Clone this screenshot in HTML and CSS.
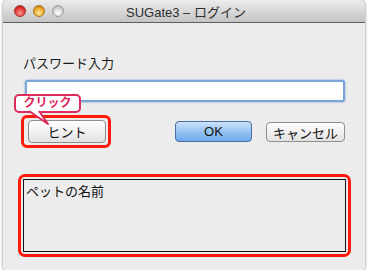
FILE: index.html
```html
<!DOCTYPE html>
<html>

<head>
  <meta charset="utf-8">
  <title>SUGate3 – ログイン</title>
  <link rel="stylesheet" href="styles.css">
</head>

<body>
  <div class="window">
    <div class="titlebar">
      <div class="lights">
        <span class="light red"></span>
        <span class="light yellow"></span>
        <span class="light gray"></span>
      </div>
      <div class="title">SUGate3 – ログイン</div>
    </div>

    <div class="content">
      <div class="label">パスワード入力</div>
      <div class="field"></div>

      <div class="buttons">
        <div class="hint-wrap">
          <div class="callout">
            クリック
            <svg class="tail" width="24" height="16" viewBox="0 0 24 16">
              <polygon points="2,0 12,0 21,14" fill="white" />
              <polyline points="2,1 21,14 12,1" fill="none" stroke="#df2a5c" stroke-width="2" stroke-linejoin="round" />
            </svg>
          </div>
          <button class="btn hint">ヒント</button>
        </div>
        <button class="btn ok">OK</button>
        <button class="btn cancel">キャンセル</button>
      </div>

      <div class="answer-wrap">
        <div class="answer">ペットの名前</div>
      </div>
    </div>
  </div>
</body>

</html>
```

FILE: styles.css
```css
body {
  margin: 0px;
  padding: 0px;
  background-color: white;
  font-family: "Liberation Sans", "Noto Sans CJK JP", sans-serif;
  overflow: hidden;
}

.window {
  margin-left: 3px;
  width: 362px;
  height: 270px;
  background-color: #ececec;
  border-radius: 5px 5px 3px 3px;
  box-shadow: 0px 0px 3px rgba(0, 0, 0, 0.55);
  display: flex;
  flex-direction: column;
  overflow: hidden;
}

.titlebar {
  height: 22px;
  border-bottom: 1px solid #5e5e5e;
  background: linear-gradient(#ececec, #c4c4c4);
  display: flex;
  align-items: center;
  position: relative;
}

.lights {
  display: flex;
  gap: 7px;
  padding-left: 11px;
}

.light {
  width: 12px;
  height: 12px;
  border-radius: 50%;
  box-sizing: border-box;
}

.red {
  background: radial-gradient(circle at 50% 70%, #ff9a94, #e0302a 60%, #9e1a18);
  border: 1px solid #a3332e;
}

.yellow {
  background: radial-gradient(circle at 50% 70%, #ffe7a0, #e8a323 60%, #a06a10);
  border: 1px solid #a5771c;
}

.gray {
  background: radial-gradient(circle at 50% 70%, #ffffff, #cfcfcf 60%, #a5a5a5);
  border: 1px solid #9b9b9b;
}

.title {
  position: absolute;
  left: 0;
  right: 0;
  text-align: center;
  font-size: 13px;
  color: #2e2e2e;
  padding-left: 4px;
}

.content {
  padding: 0px 20px 0px 20px;
  display: flex;
  flex-direction: column;
}

.label {
  margin-top: 30px;
  font-size: 13px;
  color: #1a1a1a;
  height: 17px;
}

.field {
  margin-top: 10px;
  margin-left: 2px;
  width: 316px;
  height: 18px;
  background-color: white;
  border: 2px solid #7ba4d9;
  border-radius: 3px;
  box-shadow: 0px 0px 2px #5e8fd0;
}

.buttons {
  margin-top: 13px;
  display: flex;
  align-items: center;
}

.hint-wrap {
  position: relative;
  margin-left: -2px;
  border: 3px solid #ff1a0a;
  border-radius: 6px;
  padding: 2px 2px 2px 4px;
}

.callout {
  position: absolute;
  left: -10px;
  top: -24px;
  width: 61px;
  height: 13px;
  padding: 1px 1px;
  border: 2px solid #df2a5c;
  border-radius: 5px;
  background-color: white;
  color: #e0245a;
  font-size: 12px;
  font-weight: bold;
  line-height: 13px;
  text-align: center;
}

.tail {
  position: absolute;
  left: 11px;
  top: 14px;
}

.btn {
  font-family: "Liberation Sans", "Noto Sans CJK JP", sans-serif;
  font-size: 13px;
  color: #111;
  height: 21px;
  border: 1px solid #8e8e8e;
  border-radius: 4px;
  background: linear-gradient(#ffffff, #f1f1f1 50%, #e2e2e2);
  padding: 0px;
}

.hint {
  width: 78px;
  height: 23px;
}

.ok {
  margin-left: 64px;
  width: 78px;
  border-color: #4a6fa0;
  background: linear-gradient(#cde3fb, #97c3f2 50%, #6eaaee);
}

.cancel {
  margin-left: 14px;
  width: 80px;
  height: 20px;
}

.answer-wrap {
  margin-top: 26px;
  margin-left: -5px;
  width: 323px;
  border: 3px solid #ff1a0a;
  border-radius: 7px;
  padding: 2px;
}

.answer {
  height: 69px;
  border: 1px solid #111;
  padding: 1px 2px;
  font-size: 13px;
  color: #111;
}
```
